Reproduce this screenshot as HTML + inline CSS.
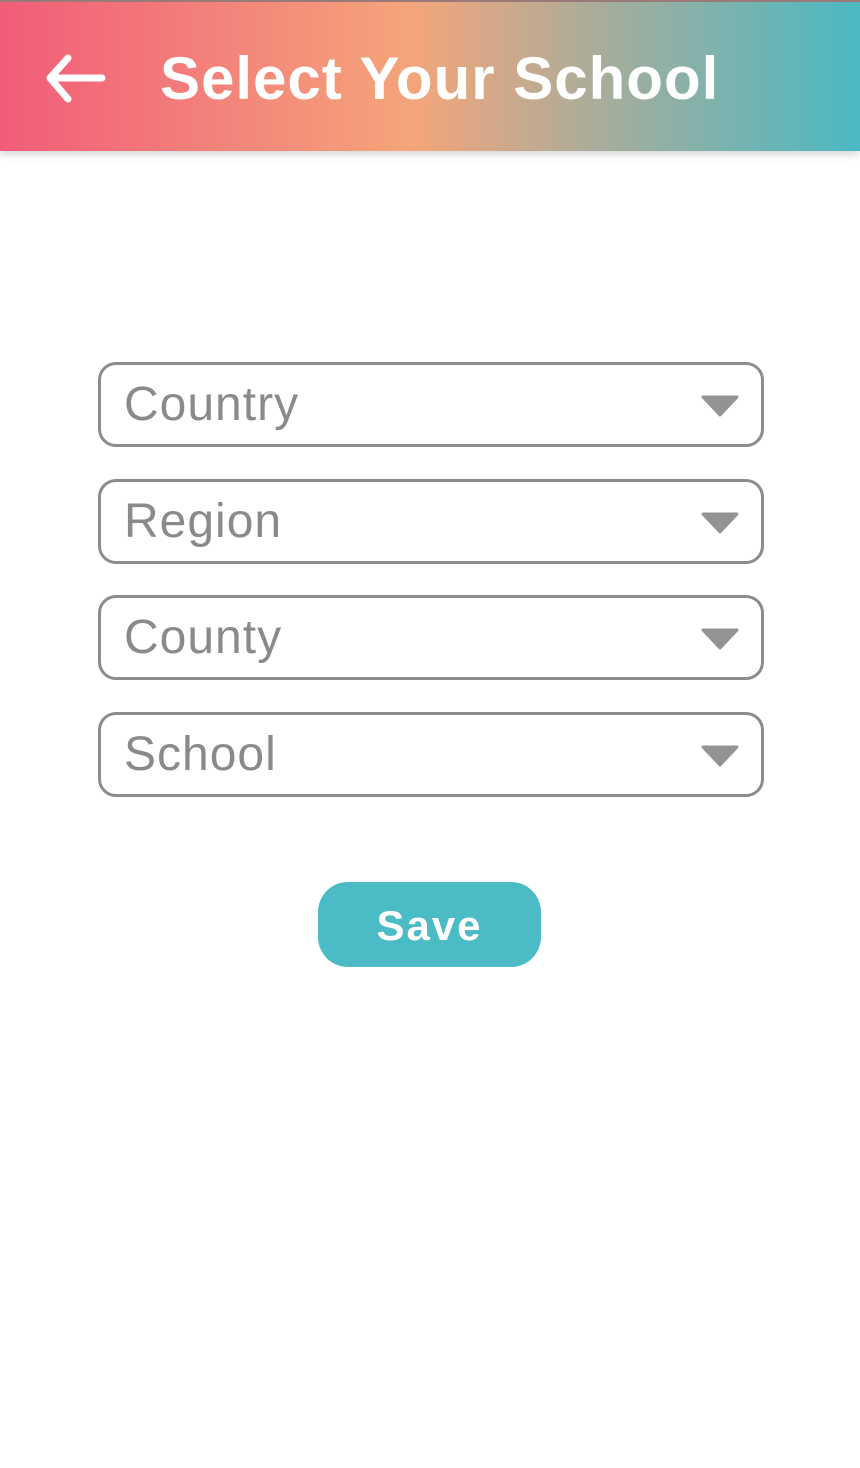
<!DOCTYPE html>
<html><head><style>
body{margin:0;width:860px;height:1468px;background:#fff;font-family:"Liberation Sans",sans-serif;position:relative;overflow:hidden}
.hdr{position:absolute;left:0;top:0;width:860px;height:151px;background:linear-gradient(90deg,#f25c7a 0%,#f38a7a 30%,#f4a57a 48%,#a7ad9b 70%,#4bb9c3 100%);box-shadow:0 3px 8px rgba(0,0,0,.18);border-top:2px solid #9a7a78;box-sizing:border-box}
.title{position:absolute;left:160px;top:42px;color:#fff;font-weight:bold;font-size:60px;letter-spacing:1px}
.box{position:absolute;left:98px;width:666px;height:85px;border:3px solid #8c8c8c;border-radius:18px;box-sizing:border-box}
.box span{position:absolute;left:23px;top:12px;font-size:48px;color:#8a8a8a;letter-spacing:1px}
.box svg{position:absolute;right:22px;top:30px}
.save{position:absolute;left:318px;top:882px;width:223px;height:85px;background:#4bbcc6;border-radius:30px;color:#fff;font-weight:bold;font-size:42px;text-align:center;line-height:88px;letter-spacing:2px}
</style></head><body>
<div class="hdr">
<svg style="position:absolute;left:44px;top:52px" width="64" height="50" viewBox="0 0 64 50"><path d="M58 24H8M24 4L6 24L24 45" stroke="#fff" stroke-width="7" fill="none" stroke-linecap="round" stroke-linejoin="round"/></svg>
<div class="title">Select Your School</div>
</div>
<div class="box" style="top:362px"><span>Country</span><svg width="38" height="22"><path d="M2 2H36L19 20Z" fill="#939393" stroke="#939393" stroke-width="3" stroke-linejoin="round"/></svg></div>
<div class="box" style="top:479px"><span>Region</span><svg width="38" height="22"><path d="M2 2H36L19 20Z" fill="#939393" stroke="#939393" stroke-width="3" stroke-linejoin="round"/></svg></div>
<div class="box" style="top:595px"><span>County</span><svg width="38" height="22"><path d="M2 2H36L19 20Z" fill="#939393" stroke="#939393" stroke-width="3" stroke-linejoin="round"/></svg></div>
<div class="box" style="top:712px"><span>School</span><svg width="38" height="22"><path d="M2 2H36L19 20Z" fill="#939393" stroke="#939393" stroke-width="3" stroke-linejoin="round"/></svg></div>
<div class="save">Save</div>
</body></html>
